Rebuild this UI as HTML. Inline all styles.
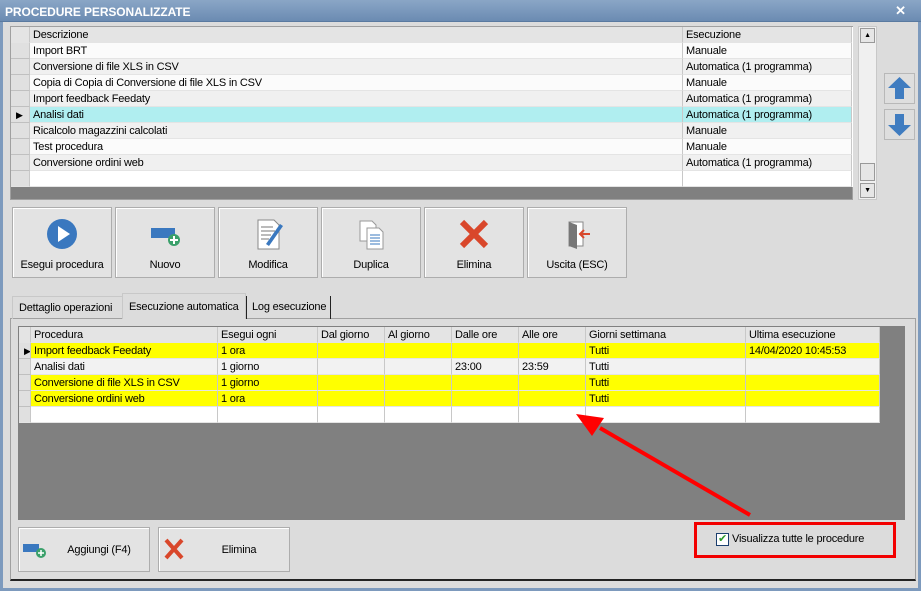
<!DOCTYPE html>
<html><head><meta charset="utf-8"><style>
*{box-sizing:border-box;margin:0;padding:0}
body{width:921px;height:591px;position:relative;background:#dcdcdc;font-family:"Liberation Sans",sans-serif;font-size:11px;letter-spacing:-0.2px;color:#000;overflow:hidden;white-space:nowrap}
.a{position:absolute}
.title{left:0;top:0;width:921px;height:22px;background:linear-gradient(#8aa6c6,#6b8bb2);color:#fff;font-weight:bold;font-size:12px;letter-spacing:-0.1px;padding:5px 0 0 5px;border-bottom:1px solid #5a7aa0}
.frame{left:0;top:22px;width:921px;height:569px;border:3px solid #7d9abd;border-top:none}
.cell{position:absolute;height:16px;line-height:16px;padding-left:3px;white-space:nowrap;overflow:hidden;border-right:1px solid #c8c8c8;border-bottom:1px solid #e4e4e4}
.btn{position:absolute;background:#e3e3e3;border:1px solid #adadad;box-shadow:inset 1px 1px #fff;text-align:center;font-size:11px}
.btn span{position:absolute;left:0;right:0;bottom:6px}
.ico{position:absolute;left:50%;top:10px;transform:translateX(-50%)}
</style></head><body>
<div class="a title">PROCEDURE PERSONALIZZATE</div>
<div class="a" style="left:894px;top:4px;width:13px;height:13px;color:#fff;font-weight:bold;font-size:13px;line-height:13px;text-align:center">✕</div>
<div class="a frame"></div>

<div class="a" style="left:10px;top:26px;width:843px;height:174px;background:#808080;border:1px solid #a0a0a0"></div>
<div class="a" style="left:11px;top:27px;width:842px;height:160px;background:#fff"></div>
<div id="g1"></div>
<div class="a" style="left:858px;top:26px;width:19px;height:174px;background:#f0f0f0;border:1px solid #c8c8c8"></div>
<div class="a" style="left:860px;top:28px;width:15px;height:15px;background:#e6e6e6;border:1px solid #999;font-size:7px;text-align:center;line-height:13px">▲</div>
<div class="a" style="left:860px;top:163px;width:15px;height:18px;background:#e6e6e6;border:1px solid #999"></div>
<div class="a" style="left:860px;top:183px;width:15px;height:15px;background:#e6e6e6;border:1px solid #999;font-size:7px;text-align:center;line-height:13px">▼</div>
<div class="a" style="left:884px;top:73px;width:31px;height:31px;background:#dedede;border:1px solid #b8b8b8"><svg width="29" height="29"><path d="M14.5 3 L26 14 H19 V25 H10 V14 H3 Z" fill="#3f7cc0"/></svg></div>
<div class="a" style="left:884px;top:109px;width:31px;height:31px;background:#dedede;border:1px solid #b8b8b8"><svg width="29" height="29"><path d="M14.5 26 L26 15 H19 V4 H10 V15 H3 Z" fill="#3f7cc0"/></svg></div>

<div class="btn" style="left:12px;top:207px;width:100px;height:71px"><svg class="ico" width="32" height="32"><circle cx="16" cy="16" r="15" fill="#3a78bf"/><path d="M12 8 L24 16 L12 24Z" fill="#fff"/></svg><span>Esegui procedura</span></div>
<div class="btn" style="left:115px;top:207px;width:100px;height:71px"><svg class="ico" width="32" height="32"><rect x="2" y="10" width="24" height="10" fill="#3a78bf"/><circle cx="25" cy="22" r="6" fill="#3aa06a"/><path d="M25 18v8M21 22h8" stroke="#fff" stroke-width="2"/></svg><span>Nuovo</span></div>
<div class="btn" style="left:218px;top:207px;width:100px;height:71px"><svg class="ico" width="32" height="32"><path d="M6 2h16l5 5v24H6z" fill="#fff" stroke="#888"/><path d="M9 9h12M9 13h14M9 17h10M9 21h8" stroke="#777"/><path d="M14 26 L28 6 L31 8 L17 28Z" fill="#3a78bf"/></svg><span>Modifica</span></div>
<div class="btn" style="left:321px;top:207px;width:100px;height:71px"><svg class="ico" width="32" height="32"><path d="M5 3h12l4 4v16H5z" fill="#fff" stroke="#999"/><path d="M12 10h12l4 4v17H12z" fill="#fff" stroke="#999"/><path d="M15 17h10M15 20h10M15 23h10M15 26h10" stroke="#3a78bf"/></svg><span>Duplica</span></div>
<div class="btn" style="left:424px;top:207px;width:100px;height:71px"><svg class="ico" width="32" height="32"><path d="M4 4L28 28M28 4L4 28" stroke="#d9472b" stroke-width="6"/></svg><span>Elimina</span></div>
<div class="btn" style="left:527px;top:207px;width:100px;height:71px"><svg class="ico" width="32" height="32"><path d="M8 4h14v24H8z" fill="#fff" stroke="#888"/><path d="M8 4l8 3v24l-8-3z" fill="#777"/><path d="M29 16H19M23 12l-4 4 4 4" stroke="#d9472b" stroke-width="2" fill="none"/></svg><span>Uscita (ESC)</span></div>

<div class="a" style="left:10px;top:318px;width:906px;height:263px;border:1px solid #a0a0a0;border-bottom:2px solid #222"></div>
<div class="a" style="left:12px;top:296px;width:112px;height:23px;border:1px solid #c8c8c8;border-bottom:none;padding:5px 0 0 6px">Dettaglio operazioni</div>
<div class="a" style="left:122px;top:293px;width:124px;height:26px;background:#dcdcdc;border:1px solid #c8c8c8;border-bottom:none;padding:7px 0 0 6px">Esecuzione automatica</div>
<div class="a" style="left:246px;top:296px;width:85px;height:23px;border-right:1px solid #222;border-left:1px solid #222;padding:5px 0 0 5px">Log esecuzione</div>

<div class="a" style="left:18px;top:326px;width:887px;height:194px;background:#808080"></div>
<div id="g2"></div>

<div class="btn" style="left:18px;top:527px;width:132px;height:45px"><svg class="a" style="left:3px;top:12px" width="26" height="20"><rect x="1" y="4" width="16" height="8" fill="#3a78bf"/><circle cx="19" cy="13" r="5" fill="#3aa06a"/><path d="M19 10v6M16 13h6" stroke="#fff" stroke-width="1.5"/></svg><span style="bottom:15px;left:30px">Aggiungi (F4)</span></div>
<div class="btn" style="left:158px;top:527px;width:132px;height:45px"><svg class="a" style="left:4px;top:9px" width="22" height="24"><path d="M3 3L19 21M19 3L3 21" stroke="#d9472b" stroke-width="4"/></svg><span style="bottom:15px;left:30px">Elimina</span></div>

<div class="a" style="left:694px;top:522px;width:202px;height:36px;border:3px solid #f20000"></div>
<div class="a" style="left:716px;top:533px;width:13px;height:13px;background:#fff;border:1px solid #1c3f6e;color:#2a9a2a;font-size:11px;line-height:11px;text-align:center">✔</div>
<div class="a" style="left:732px;top:533px">Visualizza tutte le procedure</div>

<svg class="a" style="left:0;top:0" width="921" height="591"><path d="M750 515 L600 428" stroke="#f00" stroke-width="4"/><path d="M576 414 L604 418 L592 436Z" fill="#f00"/></svg>

<script>
function grid(id,x,y,cols,rows,hl,selRow,empties){
 let h='';let c=document.getElementById(id);
 h+=`<div class="cell" style="left:${x}px;top:${y}px;width:${cols[0][1]-x}px;background:#e4e4e4"></div>`;
 cols.forEach((cl,i)=>{if(i==0)return;let l=cols[i-1][1];h+=`<div class="cell" style="left:${l}px;top:${y}px;width:${cl[1]-l}px;background:#e4e4e4;border-right:1px solid #c8c8c8">${cl[0]}</div>`});
 rows.forEach((r,ri)=>{let t=y+16*(ri+1);let bg=hl(ri);
  h+=`<div class="cell" style="left:${x}px;top:${t}px;width:${cols[0][1]-x}px;background:#e0e0e0;border-bottom:1px solid #c0c0c0;font-size:9px;padding-left:5px">${ri==selRow?'▶':''}</div>`;
  cols.forEach((cl,i)=>{if(i==0)return;let l=cols[i-1][1];h+=`<div class="cell" style="left:${l}px;top:${t}px;width:${cl[1]-l}px;background:${bg}">${r[i-1]||''}</div>`});
 });
 for(let e=0;e<empties;e++){let t=y+16*(rows.length+1+e);
  h+=`<div class="cell" style="left:${x}px;top:${t}px;width:${cols[0][1]-x}px;background:#e0e0e0"></div>`;
  cols.forEach((cl,i)=>{if(i==0)return;let l=cols[i-1][1];h+=`<div class="cell" style="left:${l}px;top:${t}px;width:${cl[1]-l}px;background:#fff"></div>`});}
 c.innerHTML=h;
}
grid('g1',11,27,[['',30],['Descrizione',683],['Esecuzione',852]],
 [['Import BRT','Manuale'],['Conversione di file XLS in CSV','Automatica (1 programma)'],['Copia di Copia di Conversione di file XLS in CSV','Manuale'],['Import feedback Feedaty','Automatica (1 programma)'],['Analisi dati','Automatica (1 programma)'],['Ricalcolo magazzini calcolati','Manuale'],['Test procedura','Manuale'],['Conversione ordini web','Automatica (1 programma)']],
 i=>i==4?'#b0eef0':(i%2?'#f0f0f0':'#fbfbfb'),4,1);
grid('g2',19,327,[['',31],['Procedura',218],['Esegui ogni',318],['Dal giorno',385],['Al giorno',452],['Dalle ore',519],['Alle ore',586],['Giorni settimana',746],['Ultima esecuzione',880]],
 [['Import feedback Feedaty','1 ora','','','','','Tutti','14/04/2020 10:45:53'],['Analisi dati','1 giorno','','','23:00','23:59','Tutti',''],['Conversione di file XLS in CSV','1 giorno','','','','','Tutti',''],['Conversione ordini web','1 ora','','','','','Tutti','']],
 i=>i==1?'#f2f2f2':'#ffff00',0,1);
</script>
</body></html>
